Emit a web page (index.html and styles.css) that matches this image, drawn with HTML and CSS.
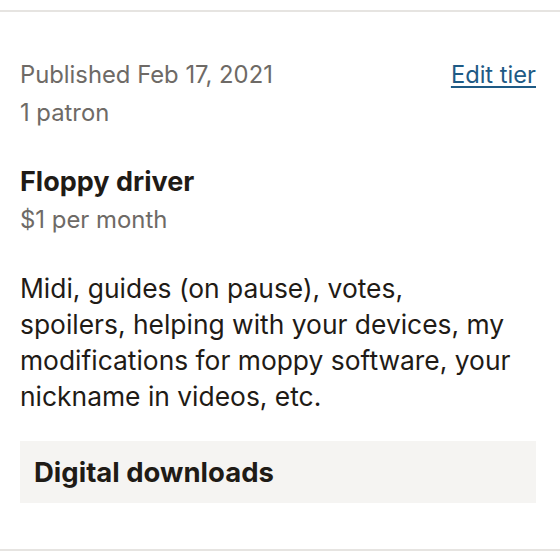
FILE: index.html
```html
<!DOCTYPE html>
<html>
<head>
<meta charset="utf-8">
<link rel="stylesheet" href="styles.css">
</head>
<body>
<div class="tier">
  <div class="head">
    <div class="meta">
      <div class="line">Published Feb 17, 2021</div>
      <div class="line">1 patron</div>
    </div>
    <a class="edit" href="#">Edit tier</a>
  </div>
  <div class="title">Floppy driver</div>
  <div class="price">$1 per month</div>
  <p class="desc">Midi, guides (on pause), votes,<br>spoilers, helping with your devices, my modifications for moppy software, your nickname in videos, etc.</p>
  <div class="benefit">Digital downloads</div>
</div>
</body>
</html>
```
FILE: styles.css
```css
html, body { margin: 0; padding: 0; background: #fff; }
body { font-family: Inter, "Noto Sans", sans-serif; color: #1f1b16; }
.tier {
  margin-top: 10px;
  border-top: 2px solid #e6e4e1;
  border-bottom: 2px solid #e6e4e1;
  padding: 44px 24px 46px 20px;
}
.head { display: flex; justify-content: space-between; align-items: flex-start; }
.meta .line { font-size: 23.8px; line-height: 38px; color: #6e6a66; }
.edit { font-size: 23.7px; line-height: 38px; color: #1e5a85; text-decoration: underline; text-decoration-thickness: 2px; text-underline-offset: 3px; }
.title { margin-top: 31px; font-size: 27px; line-height: 38px; font-weight: 700; }
.price { font-size: 23.9px; line-height: 38px; color: #6e6a66; }
.desc { margin: 31px 0 0; font-size: 26.4px; line-height: 36px; }
.benefit {
  margin-top: 27px;
  background: #f5f4f2;
  padding: 16px 14px;
  font-size: 27.5px;
  line-height: 30px;
  font-weight: 700;
}
```
